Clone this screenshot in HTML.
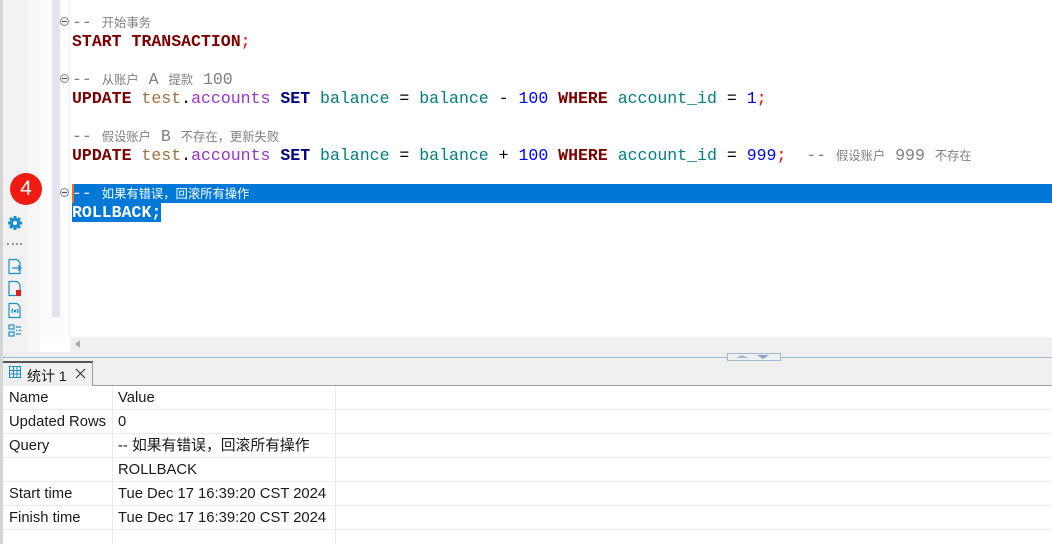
<!DOCTYPE html>
<html><head><meta charset="utf-8"><style>
body{margin:0;width:1052px;height:544px;overflow:hidden;background:#fff;position:relative;font-family:"Liberation Sans","Noto Sans CJK SC",sans-serif}
.a{position:absolute}
.code{font-family:"Liberation Mono","Noto Sans CJK SC",monospace;font-size:16.55px;white-space:pre;line-height:19px;height:19px}
.k{color:#7f0000;font-weight:bold}.s{color:#000080;font-weight:bold}.t{color:#a07040}.p{color:#9932cc}.c{color:#008080}.n{color:#0000ff}.r{color:#ff0000}.g{color:#808080}
.cj{font-family:"Noto Sans CJK SC",sans-serif;font-size:12.3px}
.fold{position:absolute;left:60px;width:7px;height:7px;border:1px solid #8a8a9a;border-radius:50%;background:#eee}
.fold:after{content:"";position:absolute;left:1px;top:3px;width:5px;height:1px;background:#555}
.row{position:absolute;left:3px;width:1049px;height:24px;border-bottom:1px solid #eaeaea;font-size:14.8px;line-height:27px;color:#1a1a1a}
.row span{position:absolute;top:0}
</style></head><body>
<div class="a" style="left:0;top:0;width:3px;height:544px;background:#d4d4d4"></div>
<div class="a" style="left:3px;top:0;width:25px;height:352px;background:#f2f2f2"></div>
<div class="a" style="left:28px;top:0;width:12px;height:352px;background:#f7f7f7"></div>
<div class="a" style="left:40px;top:0;width:29px;height:337px;background:#fcfcfc"></div>
<div class="a" style="left:52px;top:0;width:8px;height:317px;background:#e4e4f0"></div>
<div class="a" style="left:69px;top:0;width:1px;height:337px;background:#f0f0f0"></div>
<div class="a" style="left:10px;top:173px;width:32px;height:32px;border-radius:50%;background:#f01a10;color:#fff;font-size:21px;text-align:center;line-height:32px">4</div>
<svg class="a" style="left:7px;top:215px" width="16" height="16" viewBox="0 0 16 16"><g fill="#1a8fd0"><circle cx="8" cy="8" r="5.2"/><rect x="6.5" y="1" width="3" height="14"/><rect x="1" y="6.5" width="14" height="3"/><rect x="6.5" y="1" width="3" height="14" transform="rotate(45 8 8)"/><rect x="6.5" y="1" width="3" height="14" transform="rotate(-45 8 8)"/></g><circle cx="8" cy="8" r="2" fill="#fff"/></svg>
<div class="a" style="left:7px;top:243px;width:15px;border-top:2px dotted #999"></div>
<svg class="a" style="left:7px;top:258px" width="16" height="80" viewBox="0 0 16 80" fill="none" stroke="#1a8fd0" stroke-width="1.2">
<path d="M2 1.5h8l3 3v11h-11z"/><path d="M5 10h9M11 7.5l3 2.5-3 2.5"/>
<path d="M2 23.5h8l3 3v11h-11z"/><rect x="9" y="32" width="5" height="6" fill="#e02020" stroke="none"/>
<path d="M2 45.5h8l3 3v11h-11z"/><path d="M5.5 51q-1 2 0 4M10.5 51q1 2 0 4" /><circle cx="8" cy="53" r="0.8" fill="#1a8fd0"/>
<rect x="2" y="67" width="5" height="4"/><rect x="2" y="74" width="5" height="4"/><path d="M9 69h5M9 72.5h1.5M12 72.5h2M9 76h5"/>
</svg>
<div class="fold" style="top:17px"></div>
<div class="fold" style="top:74px"></div>
<div class="fold" style="top:188px"></div>
<div class="a" style="left:72px;top:184px;width:980px;height:19px;background:#0078d7"></div>
<div class="a" style="left:72px;top:203px;width:89px;height:19px;background:#0078d7"></div>
<div class="a" style="left:72px;top:184px;width:2px;height:19px;background:#f07020"></div>
<div class="a code g" style="left:72px;top:13px">-- <span class="cj">开始事务</span></div>
<div class="a code" style="left:72px;top:32px"><span class="k">START TRANSACTION</span><span class="r">;</span></div>
<div class="a code g" style="left:72px;top:70px">-- <span class="cj">从账户</span> A <span class="cj">提款</span> 100</div>
<div class="a code" style="left:72px;top:89px"><span class="k">UPDATE</span> <span class="t">test</span>.<span class="p">accounts</span> <span class="s">SET</span> <span class="c">balance</span> = <span class="c">balance</span> - <span class="n">100</span> <span class="k">WHERE</span> <span class="c">account_id</span> = <span class="n">1</span><span class="r">;</span></div>
<div class="a code g" style="left:72px;top:127px">-- <span class="cj">假设账户</span> B <span class="cj">不存在，更新失败</span></div>
<div class="a code" style="left:72px;top:146px"><span class="k">UPDATE</span> <span class="t">test</span>.<span class="p">accounts</span> <span class="s">SET</span> <span class="c">balance</span> = <span class="c">balance</span> + <span class="n">100</span> <span class="k">WHERE</span> <span class="c">account_id</span> = <span class="n">999</span><span class="r">;</span>  <span class="g">-- <span class="cj">假设账户</span> 999 <span class="cj">不存在</span></span></div>
<div class="a code" style="left:72px;top:184px;color:#fff">-- <span class="cj">如果有错误，回滚所有操作</span></div>
<div class="a code" style="left:72px;top:203px;color:#fff;font-weight:bold">ROLLBACK;</div>
<div class="a" style="left:70px;top:337px;width:982px;height:15px;background:#f0f0f0"></div>
<div class="a" style="left:75px;top:340px;width:0;height:0;border:4px solid transparent;border-right:5px solid #aaa;border-left:0"></div>
<div class="a" style="left:3px;top:352px;width:1049px;height:10px;background:#f0f0f0"></div>
<div class="a" style="left:3px;top:357px;width:1049px;height:1px;background:#a5b8cc"></div>
<div class="a" style="left:727px;top:353px;width:52px;height:6px;border:1px solid #a5b8cc;background:#eef2f6"></div>
<div class="a" style="left:736px;top:355px;width:0;height:0;border-left:6px solid transparent;border-right:6px solid transparent;border-bottom:3px solid #a5b8cc"></div>
<div class="a" style="left:757px;top:355px;width:0;height:0;border-left:6px solid transparent;border-right:6px solid transparent;border-top:4px solid #8aa4c0"></div>
<div class="a" style="left:3px;top:362px;width:1049px;height:23px;background:#f0f0f0;border-bottom:1px solid #a0a0a0"></div>
<div class="a" style="left:3px;top:361px;width:89px;height:25px;background:#f0f0f0;border-top:2px solid #555;border-right:1px solid #a0a0a0"></div>
<svg class="a" style="left:9px;top:366px" width="12" height="12" viewBox="0 0 12 12" fill="none" stroke="#1a8fd0"><rect x=".5" y=".5" width="11" height="11"/><path d="M.5 4.5h11M.5 8h11M4.5.5v11M8 .5v11"/></svg>
<div class="a" style="left:27px;top:366px;font-size:14px;color:#1a1a1a">统计 1</div>
<svg class="a" style="left:75px;top:368px" width="11" height="11" viewBox="0 0 11 11" stroke="#333" stroke-width="1.1"><path d="M1 1l9 9M10 1l-9 9"/></svg>
<div class="a" style="left:3px;top:386px;width:1049px;height:158px;background:#fff"></div>
<div class="a" style="left:112px;top:386px;width:1px;height:158px;background:#eaeaea"></div>
<div class="a" style="left:335px;top:386px;width:1px;height:158px;background:#eaeaea"></div>
<div class="row" style="top:385px"><span style="left:6px">Name</span><span style="left:115px">Value</span></div>
<div class="row" style="top:409px"><span style="left:6px">Updated Rows</span><span style="left:115px">0</span></div>
<div class="row" style="top:433px"><span style="left:6px">Query</span><span style="left:115px">-- 如果有错误，回滚所有操作</span></div>
<div class="row" style="top:457px"><span style="left:115px">ROLLBACK</span></div>
<div class="row" style="top:481px"><span style="left:6px">Start time</span><span style="left:115px">Tue Dec 17 16:39:20 CST 2024</span></div>
<div class="row" style="top:505px"><span style="left:6px">Finish time</span><span style="left:115px">Tue Dec 17 16:39:20 CST 2024</span></div>
</body></html>
